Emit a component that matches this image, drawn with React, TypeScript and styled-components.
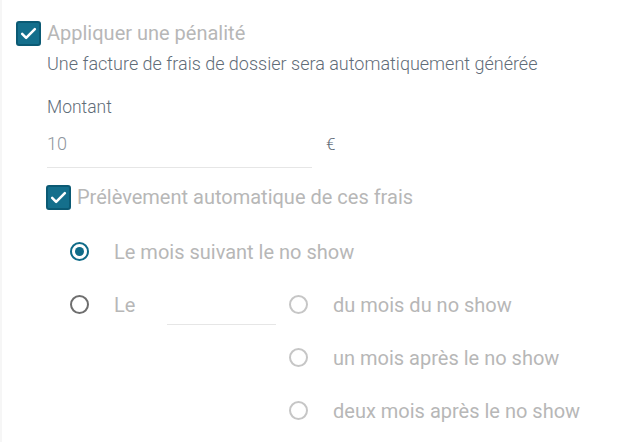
import React from "react";
import styled, { createGlobalStyle } from "styled-components";

const Global = createGlobalStyle`
  html, body { margin: 0; padding: 0; background: #fff; }
  body { font-family: Roboto, "Noto Sans", sans-serif; }
`;

const Page = styled.div`
  width: 638px;
  height: 442px;
  box-sizing: border-box;
  border-left: 2px solid #f6f6f6;
  padding: 21px 0 0 14px;
`;

const CheckRow = styled.label`
  display: flex;
  align-items: center;
  gap: 6px;
`;

const Box = styled.span`
  width: 25px;
  height: 25px;
  box-sizing: border-box;
  border-radius: 3px;
  background: #146f8c;
  border: 2px solid #0b5a74;
  display: flex;
  align-items: center;
  justify-content: center;
  flex-shrink: 0;
`;

const CheckLabel = styled.span`
  font-size: 20px;
  color: #b7b7b7;
  line-height: 25px;
`;

const Indented = styled.div`
  padding-left: 31px;
  display: flex;
  flex-direction: column;
`;

const Description = styled.div`
  font-size: 18px;
  font-weight: 300;
  color: #5f6c78;
  margin-top: 8px;
  line-height: 20px;
`;

const FieldLabel = styled.div`
  font-size: 17.5px;
  font-weight: 300;
  color: #5f6c78;
  margin-top: 23px;
  line-height: 20px;
`;

const AmountRow = styled.div`
  display: flex;
  align-items: flex-start;
  margin-top: 17px;
`;

const AmountInput = styled.div`
  width: 265px;
  box-sizing: border-box;
  border-bottom: 1px solid #e6e6e6;
  font-size: 18px;
  font-weight: 300;
  color: #8e969e;
  line-height: 20px;
  padding-bottom: 13px;
`;

const Unit = styled.span`
  font-size: 17px;
  font-weight: 300;
  color: #5f6c78;
  margin-left: 14px;
  line-height: 20px;
`;

const SubCheck = styled.div`
  margin-top: 17px;
  margin-left: -1px;
`;

const RadioList = styled.div`
  display: grid;
  grid-template-columns: 44px 175px 44px auto;
  grid-auto-rows: 53px;
  align-items: center;
  padding-left: 23px;
  margin-top: 15px;
`;

const Circle = styled.span<{ $checked?: boolean; $tone: "active" | "dark" | "light" }>`
  width: 19px;
  height: 19px;
  box-sizing: border-box;
  border-radius: 50%;
  border: 2px solid
    ${(p) => (p.$tone === "active" ? "#0f6b88" : p.$tone === "dark" ? "#6e6e6e" : "#c6c6c6")};
  display: flex;
  align-items: center;
  justify-content: center;
  &::after {
    content: "";
    display: ${(p) => (p.$checked ? "block" : "none")};
    width: 9px;
    height: 9px;
    border-radius: 50%;
    background: #0f6b88;
  }
`;

const RadioText = styled.span<{ $span?: number }>`
  font-size: 20px;
  color: #b7b7b7;
  grid-column: ${(p) => (p.$span ? `span ${p.$span}` : "auto")};
  white-space: nowrap;
`;

const InlineWrap = styled.div`
  display: flex;
  align-items: center;
  height: 100%;
`;

const DayInput = styled.div`
  width: 109px;
  margin-left: 32px;
  box-sizing: border-box;
  border-bottom: 1px solid #e6e6e6;
  align-self: flex-start;
  height: 47px;
`;

const Check = () => (
  <svg width="19" height="19" viewBox="0 0 24 24" fill="none">
    <path d="M4 12.5l5 5L20 6.5" stroke="#fff" strokeWidth="3.2" strokeLinecap="round" strokeLinejoin="round" />
  </svg>
);

export default function App() {
  return (
    <>
      <Global />
      <Page>
        <CheckRow>
          <Box><Check /></Box>
          <CheckLabel>Appliquer une pénalité</CheckLabel>
        </CheckRow>
        <Indented>
          <Description>Une facture de frais de dossier sera automatiquement générée</Description>
          <FieldLabel>Montant</FieldLabel>
          <AmountRow>
            <AmountInput>10</AmountInput>
            <Unit>€</Unit>
          </AmountRow>
          <SubCheck>
            <CheckRow>
              <Box><Check /></Box>
              <CheckLabel>Prélèvement automatique de ces frais</CheckLabel>
            </CheckRow>
          </SubCheck>
          <RadioList>
            <Circle $checked $tone="active" />
            <RadioText $span={3}>Le mois suivant le no show</RadioText>

            <Circle $tone="dark" />
            <InlineWrap>
              <RadioText>Le</RadioText>
              <DayInput />
            </InlineWrap>
            <Circle $tone="light" />
            <RadioText>du mois du no show</RadioText>

            <span />
            <span />
            <Circle $tone="light" />
            <RadioText>un mois après le no show</RadioText>

            <span />
            <span />
            <Circle $tone="light" />
            <RadioText>deux mois après le no show</RadioText>
          </RadioList>
        </Indented>
      </Page>
    </>
  );
}
